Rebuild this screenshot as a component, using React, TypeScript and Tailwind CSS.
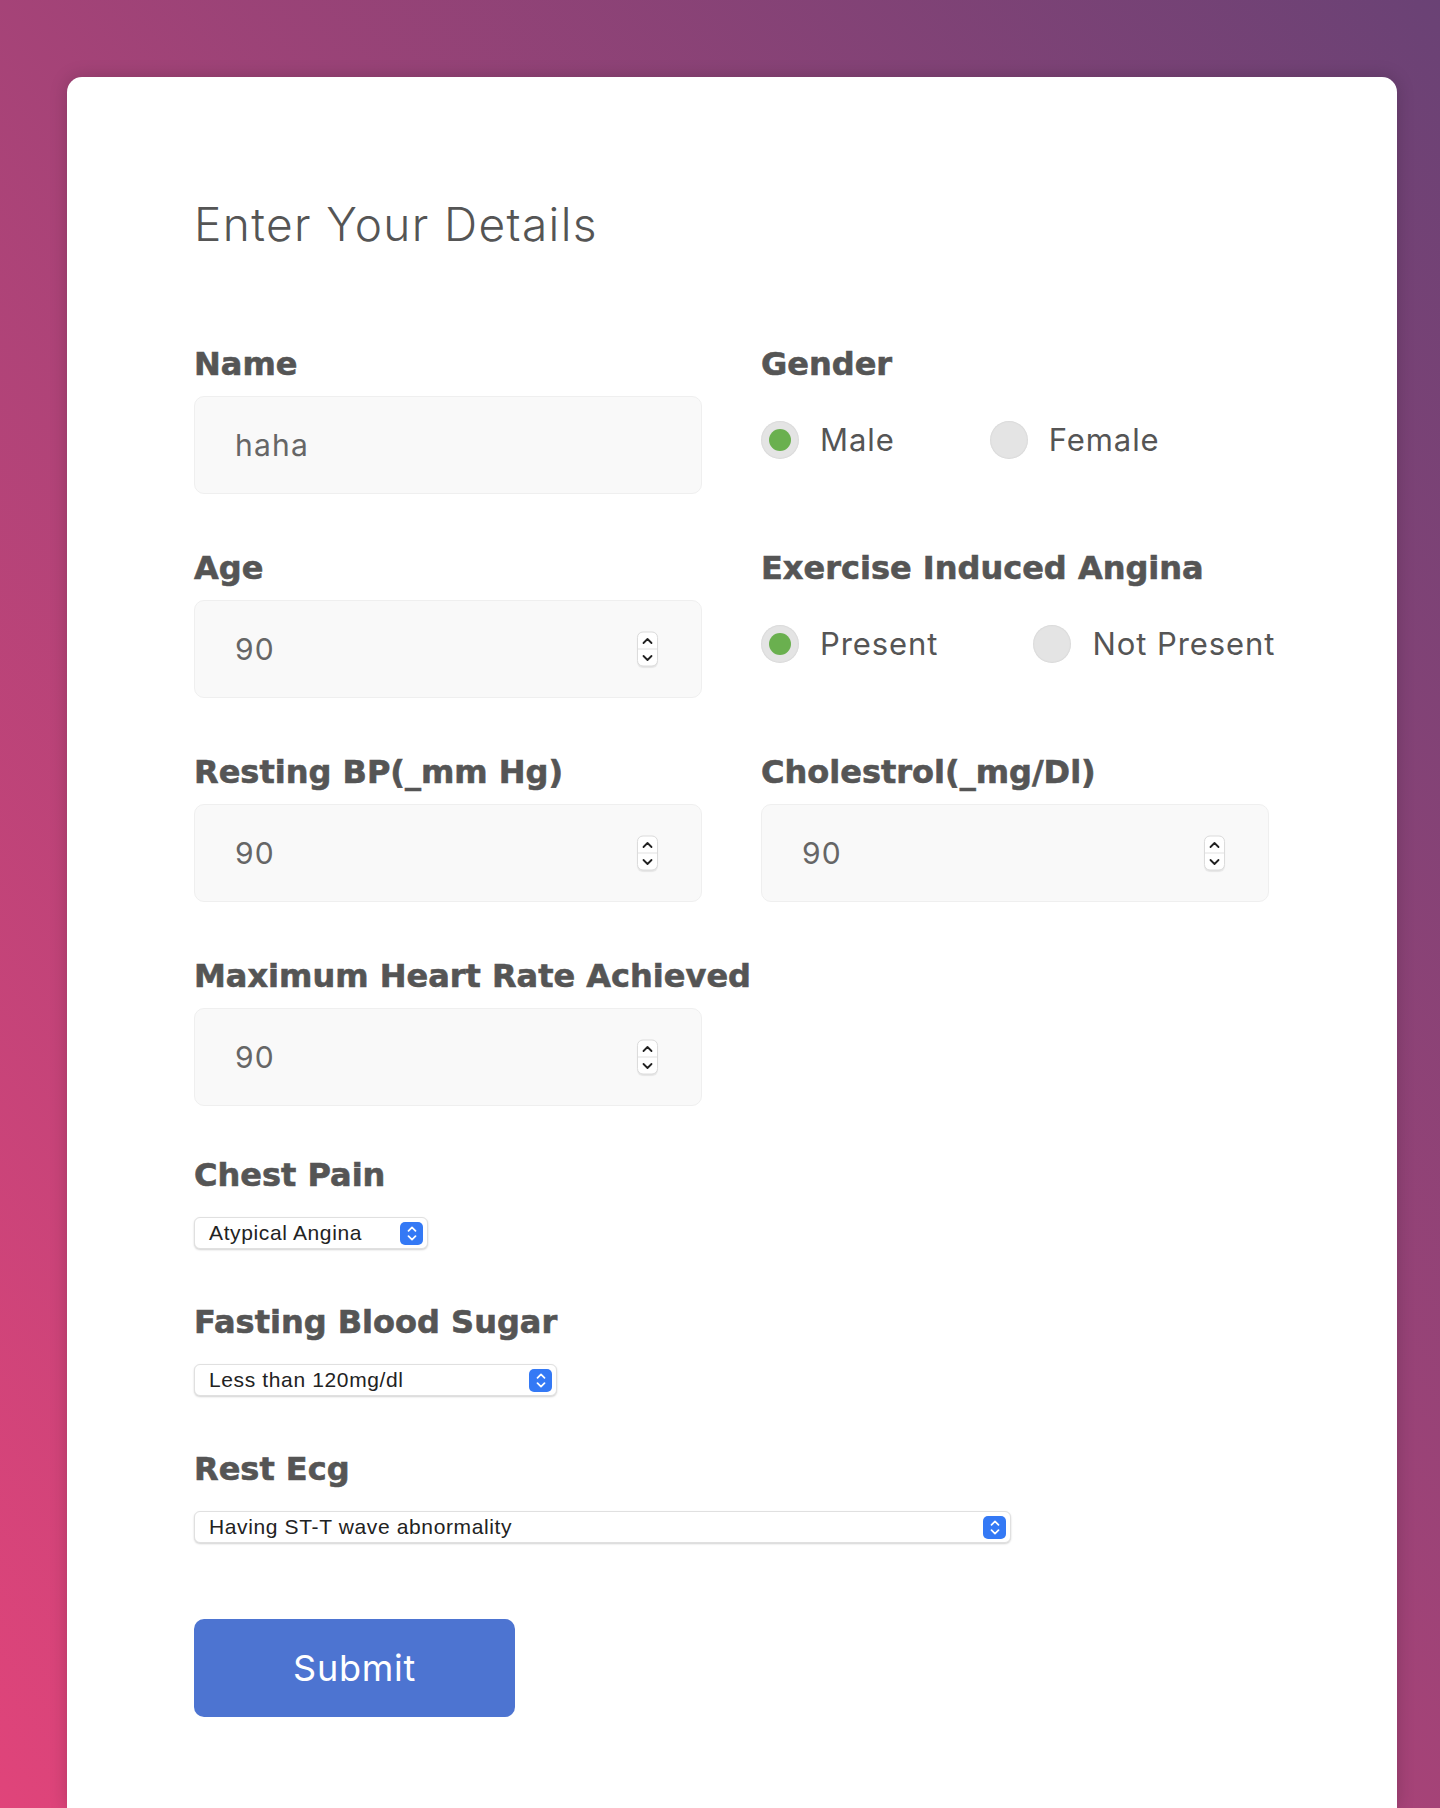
import React from "react";

const labelCls =
  "text-[32px] leading-[40px] font-bold text-[#555] [-webkit-text-stroke:0.6px_#555] whitespace-nowrap font-['DejaVu_Sans','Inter',sans-serif]";

const Spinner = () => (
  <div className="absolute right-[43px] top-1/2 -translate-y-1/2 w-[21px] h-[35px] rounded-[6px] bg-white border border-[#dcdcdc] shadow-[0_1px_1px_rgba(0,0,0,0.08)] flex flex-col">
    <div className="flex-1 flex items-center justify-center border-b border-[#e2e2e2]">
      <svg width="11" height="7" viewBox="0 0 11 7" fill="none">
        <path d="M1.5 5.5L5.5 1.5L9.5 5.5" stroke="#222" strokeWidth="1.8" strokeLinecap="round" strokeLinejoin="round" />
      </svg>
    </div>
    <div className="flex-1 flex items-center justify-center">
      <svg width="11" height="7" viewBox="0 0 11 7" fill="none">
        <path d="M1.5 1.5L5.5 5.5L9.5 1.5" stroke="#222" strokeWidth="1.8" strokeLinecap="round" strokeLinejoin="round" />
      </svg>
    </div>
  </div>
);

const Field = ({ label, value, number }: { label: string; value: string; number?: boolean }) => (
  <div className="flex flex-col gap-[12px]">
    <label className={labelCls}>{label}</label>
    <div className="relative h-[98px] w-[508px] rounded-[10px] bg-[#f9f9f9] border border-[#efefef] flex items-center pl-[40px] text-[30px] tracking-[0.04em] text-[#666]">
      {value}
      {number && <Spinner />}
    </div>
  </div>
);

const Radio = ({ label, checked }: { label: string; checked?: boolean }) => (
  <div className="flex items-center gap-[21px] shrink-0">
    <span className="w-[38px] h-[38px] rounded-full bg-[#e4e4e4] shadow-[inset_0_0_2px_rgba(0,0,0,0.12)] flex items-center justify-center">
      {checked && <span className="w-[22px] h-[22px] rounded-full bg-[#6ab04f]" />}
    </span>
    <span className="text-[31px] tracking-[0.03em] text-[#555] whitespace-nowrap">{label}</span>
  </div>
);

const RadioField = ({ label, options }: { label: string; options: [string, boolean][] }) => (
  <div className="flex flex-col gap-[12px]">
    <label className={labelCls}>{label}</label>
    <div className="h-[88px] flex items-center gap-[95px]">
      {options.map(([o, c]) => (
        <Radio key={o} label={o} checked={c} />
      ))}
    </div>
  </div>
);

const Select = ({ label, value, width }: { label: string; value: string; width: string }) => (
  <div className="flex flex-col gap-[22px]">
    <label className={labelCls}>{label}</label>
    <div
      className={`${width} h-[32px] rounded-[6px] bg-white border border-[#e0e0e0] shadow-[0_1px_2px_rgba(0,0,0,0.18)] flex items-center justify-between pl-[14px] pr-[4px] font-['Liberation_Sans',Arial,sans-serif] text-[21px] tracking-[0.03em] text-[#222]`}
    >
      <span>{value}</span>
      <span className="w-[23px] h-[23px] rounded-[5px] bg-[#3479f5] flex flex-col items-center justify-center gap-[3px]">
        <svg width="10" height="6" viewBox="0 0 10 6" fill="none">
          <path d="M1.5 4.8L5 1.3L8.5 4.8" stroke="#fff" strokeWidth="1.7" strokeLinecap="round" strokeLinejoin="round" />
        </svg>
        <svg width="10" height="6" viewBox="0 0 10 6" fill="none">
          <path d="M1.5 1.2L5 4.7L8.5 1.2" stroke="#fff" strokeWidth="1.7" strokeLinecap="round" strokeLinejoin="round" />
        </svg>
      </span>
    </div>
  </div>
);

export default function App() {
  return (
    <div className="min-h-[1808px] bg-[linear-gradient(to_top_right,#e0447a,#6a4275)] pt-[77px] pl-[67px] font-['Inter','Noto_Sans',sans-serif] overflow-hidden">
      <div className="w-[1330px] min-h-[1731px] rounded-t-[15px] bg-white shadow-[0_0_18px_rgba(0,0,0,0.18)] pt-[121px] pl-[127px] pb-[40px]">
        <h1 className="text-[46px] leading-[52px] font-light tracking-[0.03em] text-[#555]">Enter Your Details</h1>

        <div className="mt-[94px] grid grid-cols-[508px_508px] gap-x-[59px] gap-y-[54px]">
          <Field label="Name" value="haha" />
          <RadioField label="Gender" options={[["Male", true], ["Female", false]]} />
          <Field label="Age" value="90" number />
          <RadioField label="Exercise Induced Angina" options={[["Present", true], ["Not Present", false]]} />
          <Field label="Resting BP(_mm Hg)" value="90" number />
          <Field label="Cholestrol(_mg/Dl)" value="90" number />
          <Field label="Maximum Heart Rate Achieved" value="90" number />
        </div>

        <div className="mt-[49px] flex flex-col gap-[53px]">
          <Select label="Chest Pain" value="Atypical Angina" width="w-[234px]" />
          <Select label="Fasting Blood Sugar" value="Less than 120mg/dl" width="w-[363px]" />
          <Select label="Rest Ecg" value="Having ST-T wave abnormality" width="w-[817px]" />
        </div>

        <button className="mt-[76px] w-[321px] h-[98px] rounded-[10px] bg-[#4d74d1] text-white text-[36px] tracking-[0.02em]">
          Submit
        </button>
      </div>
    </div>
  );
}
